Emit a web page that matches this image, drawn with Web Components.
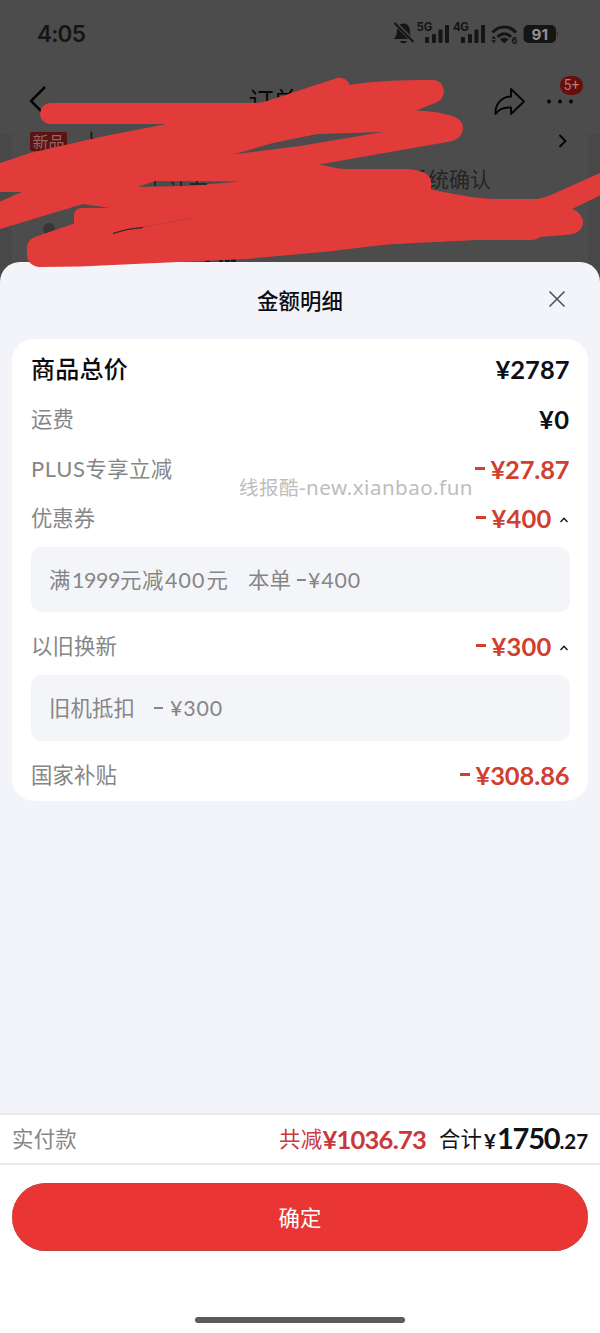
<!DOCTYPE html>
<html lang="zh-CN">
<head>
<meta charset="utf-8">
<title>金额明细</title>
<style>
html,body{margin:0;padding:0}
body{width:600px;height:1333px;overflow:hidden;background:#4c4c4c;font-family:"Noto Sans CJK SC",sans-serif}
</style>
</head>
<body>
<order-screen></order-screen>
<script>
const define = (name, html, ready) => customElements.define(name, class extends HTMLElement {
  constructor() {
    super();
    this.attachShadow({mode: 'open'}).innerHTML = html;
  }
  connectedCallback() { if (ready) ready(this, this.shadowRoot); }
});

define('order-screen', `
<style>
:host{display:flex;flex-direction:column;position:relative;width:600px;height:1333px;overflow:hidden}
dimmed-page{height:262px;flex:none}
amount-sheet{flex:1}
red-marker{position:absolute;left:0;top:0;z-index:3;pointer-events:none}
.mark{position:absolute;left:239px;top:474px;z-index:2;font:19.5px/26px "Noto Sans CJK SC",sans-serif;color:#bdbdbd;white-space:nowrap;display:flex;align-items:baseline}
.mark .url{font:20.5px/26px "Noto Sans",sans-serif}
</style>
<dimmed-page></dimmed-page>
<amount-sheet></amount-sheet>
<div class="mark"><text-run w="60">线报酷</text-run><text-run class="url" w="174">-new.xianbao.fun</text-run></div>
<red-marker></red-marker>`);

define('dimmed-page', `
<style>
:host{display:flex;flex-direction:column;background:#4c4c4c;color:#070707}
nav{height:66px;display:flex;align-items:center;justify-content:space-between;box-sizing:border-box;padding:0 16px 0 29px}
nav svg{display:block}
.title{font-size:25px;line-height:34px;width:104px;margin:-5px 0 0 59px}
.body{flex:1;background:#484848;padding:0 12px;display:flex;margin-bottom:-24px}
.card{flex:1;background:#4c4c4c;padding:0 18px;display:flex;flex-direction:column}
.line{display:flex;align-items:center;height:14px;font-size:20px;line-height:20px}
.new{background:#5c1212;color:#8f6868;font-size:16px;line-height:19px;height:19px;width:37px;text-align:center;border-radius:2px}
.go{margin-left:auto;margin-right:1px}
.line2{height:50px;margin-top:5px;display:flex;align-items:center;justify-content:flex-end;padding-right:79px;font-size:21px;color:#242424}
.dot{width:12px;height:12px;border-radius:50%;background:#3b3636;margin:20px 0 0 13px}
.more{position:relative;width:44px;height:30px}
.badge{position:absolute;left:20px;top:-10px;width:23px;height:19px;border-radius:10px;background:#6a0d0d;color:#b47d7d;font:14px/19px Roboto,sans-serif;text-align:center}
.actions{display:flex;align-items:center;gap:15px}
</style>
<status-bar></status-bar>
<nav>
<svg width="20" height="30" viewBox="0 0 20 30"><path d="M16 1 2 15 15 28" fill="none" stroke="#050505" stroke-width="2.5"/></svg>
<div class="title">订单</div>
<div class="actions">
<svg width="32" height="30" viewBox="0 0 32 30"><path d="M18 3 31 15.5 18 28V21.5C11 21 6 22.800 2.500 28 2 18.500 8 11 18 10.500Z" fill="none" stroke="#050505" stroke-width="1.900" stroke-linejoin="round"/></svg>
<div class="more"><svg width="44" height="30" viewBox="0 0 44 30"><g fill="#050505"><circle cx="9" cy="15.500" r="2"/><circle cx="20" cy="15.500" r="2"/><circle cx="31" cy="15.500" r="2"/></g></svg><span class="badge">5+</span></div>
</div>
</nav>
<div class="body"><div class="card">
<div class="line"><span class="new">新品</span><span style="margin-left:15px;color:#151515">上</span>
<svg class="go" width="12" height="16" viewBox="0 0 12 16"><path d="M2.500 2 8.500 8 2.500 14" fill="none" stroke="#050505" stroke-width="2"/></svg></div>
<div class="line2"><text-run w="84">系统确认</text-run></div>
<div class="dot"></div>
</div></div>`);

define('status-bar', `
<style>
:host{display:flex;align-items:center;justify-content:space-between;height:68px;padding:0 38px;box-sizing:border-box;color:#151515}
.time{font:600 22.5px/30px Inter,sans-serif;margin-left:-1px}
svg{display:block}
text{font-family:Inter,sans-serif;font-weight:700}
</style>
<span class="time"><text-run w="48">4:05</text-run></span>
<svg width="170" height="28" viewBox="392 19 170 28" fill="#151515">
<path d="M403.500 22.500c-4.500 0-6.500 3.500-6.500 7.500 0 3.500-1.500 5.500-3 8h18.500c-1.500-2.500-2.700-4.500-2.700-8 0-4-2-7.500-6.300-7.500ZM400 40h7c-.8 3-6.200 3-7 0Z"/>
<path d="m394 21 20 20" stroke="#4c4c4c" stroke-width="4"/><path d="m395 22.500 18 18" stroke="#151515" stroke-width="2" stroke-linecap="round"/>
<text x="416.500" y="30" font-size="11.500" textLength="16">5G</text>
<g><rect x="425" y="36" width="4" height="6" rx="1"/><rect x="432" y="33" width="4" height="9" rx="1"/><rect x="438.500" y="28.500" width="4" height="13.500" rx="1"/><rect x="445" y="24" width="4" height="18" rx="1"/></g>
<text x="453" y="30" font-size="11.500" textLength="16">4G</text>
<g transform="translate(36)"><rect x="425" y="36" width="4" height="6" rx="1"/><rect x="432" y="33" width="4" height="9" rx="1"/><rect x="438.500" y="28.500" width="4" height="13.500" rx="1"/><rect x="445" y="24" width="4" height="18" rx="1"/></g>
<g fill="none" stroke="#151515" stroke-width="3"><path d="M492.500 31.500c6.500-7.500 17-7.500 23.500 0"/><path d="M497.500 36c4-4.500 9.500-4.500 13.500 0"/></g>
<path d="m500 38.500 4.300 3.800 4.300-3.800c-2.400-2.300-6.200-2.300-8.600 0Z"/>
<path d="m491.200 37.700 2.500-3 2.500 3Zm0 1.600 2.500 3 2.500-3Z"/>
<text x="511.500" y="43" font-size="9">6</text>
<rect x="523.500" y="24" width="32.500" height="18" rx="5"/><path d="M557 30v6q1.500-3 0-6Z"/>
<text x="531.500" y="38.500" font-size="15" fill="#929292" textLength="16.500" lengthAdjust="spacingAndGlyphs">91</text>
</svg>`);

define('amount-sheet', `
<style>
:host{display:flex;flex-direction:column;background:#f3f4f9;border-radius:20px 20px 0 0;position:relative;z-index:1;overflow:hidden}
header{height:77px;display:grid;grid-template-columns:60px 1fr 60px;align-items:center;color:#0c0d12;font-weight:500;font-size:21.4px}
header text-run{justify-self:center;margin-top:-2px}
header svg{justify-self:start;margin-left:8px;margin-top:-4px}
.card{margin:0 12px;height:462px;box-sizing:border-box;background:#fff;border-radius:22px;padding:5px 18.5px 0 19px;display:flex;flex-direction:column}
.space{flex:1}
</style>
<header><i></i><text-run w="86">金额明细</text-run><svg width="18" height="18" viewBox="0 0 18 18"><path d="m1.500 1.500 15 15m0-15-15 15" stroke="#4b4d55" stroke-width="1.500"/></svg></header>
<section class="card">
<fee-row strong><text-run w="97" slot="label">商品总价</text-run><text-run w="74">¥2787</text-run></fee-row>
<fee-row><text-run w="43" slot="label">运费</text-run><text-run w="30.500">¥0</text-run></fee-row>
<fee-row off><span slot="label"><text-run w="54.500" style="font-family:Lato,sans-serif;font-size:22px">PLUS</text-run><text-run w="87">专享立减</text-run></span><text-run w="79">¥27.87</text-run></fee-row>
<fee-row off open style="height:49px"><text-run w="64" slot="label">优惠券</text-run><text-run w="60">¥400</text-run></fee-row>
<detail-box style="height:65px;margin:4px 0 10px"><text-run w="23">满</text-run><text-run w="48">1999</text-run><text-run w="44">元减</text-run><text-run w="40.500" style="margin:0 1px 0 1px">400</text-run><text-run w="41.500">元</text-run><text-run w="43">本单</text-run><i style="margin:0 2px 0 6px"></i><text-run w="53">¥400</text-run></detail-box>
<fee-row off open style="height:49px"><text-run w="86" slot="label">以旧换新</text-run><text-run w="60">¥300</text-run></fee-row>
<detail-box style="height:66px;margin:4px 0 9px"><text-run w="86">旧机抵扣</text-run><i style="margin:0 7px 0 19px"></i><text-run w="53">¥300</text-run></detail-box>
<fee-row off><text-run w="86" slot="label">国家补贴</text-run><text-run w="94">¥308.86</text-run></fee-row>
</section>
<div class="space"></div>
<pay-footer></pay-footer>`);

define('fee-row', `
<style>
:host{display:flex;align-items:center;justify-content:space-between;height:50px;flex:none;font-size:21.400px;color:#868686}
:host([strong]){font-size:24px;font-weight:500;color:#0b0b0d}
.label{display:block;padding-bottom:4px}
.amount{display:flex;align-items:center;font:700 25.500px/32px Lato,sans-serif;color:#0d0e18}
:host([off]) .amount{color:#cf4030}
:host([open]) .amount{margin-top:-1px}
.minus,.caret{display:none}
:host([off]) .minus{display:block;width:10px;height:3px;background:currentColor;margin-right:5.500px;margin-top:-1px}
:host([open]) .caret{display:block;margin-left:7px;margin-right:1px;margin-top:3px}
</style>
<span class="label"><slot name="label"></slot></span>
<div class="amount"><i class="minus"></i><slot></slot><svg class="caret" width="10" height="8" viewBox="0 0 10 8"><path d="m1.500 6 3.500-3.800L8.500 6" fill="none" stroke="#111" stroke-width="1.300"/></svg></div>`);

define('detail-box', `
<style>
:host{display:flex;align-items:center;flex:none;box-sizing:border-box;background:#f4f5f9;border-radius:11px;padding-left:18px;font:21.400px/30px Lato,"Noto Sans CJK SC",sans-serif;color:#868686}
::slotted(i){width:9px;height:2px;background:#868686}
</style><slot></slot>`);

define('pay-footer', `
<style>
:host{display:flex;flex-direction:column;height:220px;background:#fff;border-top:2px solid #e8e8ea;box-sizing:border-box;font-size:21.400px}
.sum{height:50px;box-sizing:border-box;border-bottom:2px solid #e8e8ea;display:flex;align-items:center;padding:0 12px 3px;color:#868686}
.save{margin-left:auto;color:#c9383c;display:flex;align-items:baseline}
.save b{font:700 25.500px/30px Lato,sans-serif;position:relative;top:2px}
.total{margin-left:13px;color:#111218;display:flex;align-items:baseline}
.total b{font:700 20.500px/30px Lato,sans-serif;position:relative;top:2px}
.total .int{font-size:29px}
button{margin:18px 12px 0;height:68px;border:0;border-radius:34px;background:#e93634;box-shadow:inset 0 1px #bd4643,inset 0 -1px #bd4643;color:#fff;font:21.400px/30px "Noto Sans CJK SC",sans-serif}
.home{width:210px;height:6px;border-radius:3px;background:#5b5b5b;margin:66px auto 0}
</style>
<div class="sum"><text-run w="65">实付款</text-run>
<div class="save"><text-run w="43.500">共减</text-run><b><text-run w="103.500">¥1036.73</text-run></b></div>
<div class="total"><text-run w="43">合计</text-run><b style="margin-left:2px"><text-run w="13">¥</text-run></b><b class="int"><text-run w="62.500">1750</text-run></b><b><text-run w="28.500">.27</text-run></b></div></div>
<button>确定</button>
<div class="home"></div>`);

// Freehand strokes over the order header; the even-odd rule keeps the gaps between strokes open.
define('red-marker', `
<style>:host{display:block}svg{display:block}</style>
<svg width="600" height="280" viewBox="0 0 600 280">
<g fill="#191919"><path d="M205 260h5v2h-5zm14-1h4v3h-4zm6 1h5v2h-5zm6-1h5v3h-5z"/></g>
<path fill="#e23c3a" fill-rule="evenodd" d="M50.500 103H250C258 103 264 102.500 270 100L334 79C341 76 347 79 350 85C372 81 400 80 433 80C440 80 444 86 444 92C443 98 440 101 435 103L416 110.500C432 111 442 113 452 116C459 118 463 122 463 129C462 136 457 140 450 141.500L319 164.500C328 166 337 169 345 169H408C418 170 427 172 430 178C432 182 431 186 431 189.500C450 193 473 199 500 199H534C540 199 546 197 551 195L600 173V195.500L572 209C580 212 583 217 583 223C582 230 578 233 570 234.500L540 237C537 239 535 240 530 240H475C440 242 407 243 382 245L328 251.500L300 254L247 259L200 261L80 266.500L39 267C31 266 27 261 27 255V248C27 243 30 239 35 237L74 223.500V216C74 211 77 208 82 208H110L83 204L0 229V201.500L22 192H0V163L30 153L100 137L167 124H50.500A10.500 10.500 0 0 1 50.500 103Z
M233 154.500 273 143 300 137.500 317 134 383 132 300 146ZM138 187 149 183 156 181 241 181.500 187 186Z"/>
<path d="M113 233.500Q126 228.500 143 227.500Q125 229 113 233.500Z" fill="#222" stroke="#222" stroke-width=".7"/><path d="m143 227 50-9" stroke="#a53a38" stroke-width=".6"/>
<path d="M155 181v5m17-4 2 3m7-4v5m9-2h17m-10-3v3" stroke="#1c1c1c" stroke-width="1.500" fill="none"/>
</svg>`);

// Spreads its text over a set width by adjusting the tracking.
define('text-run', `
<style>:host{display:inline-block;white-space:nowrap}span{display:inline-block}</style><span><slot></slot></span>`,
(host, root) => {
  const w = parseFloat(host.getAttribute('w'));
  const span = root.querySelector('span');
  const n = [...host.textContent].length;
  if (n > 1) {
    const natural = span.getBoundingClientRect().width;
    span.style.letterSpacing = ((w - natural) / n).toFixed(3) + 'px';
  }
  host.style.width = w + 'px';
});
</script>
</body>
</html>
